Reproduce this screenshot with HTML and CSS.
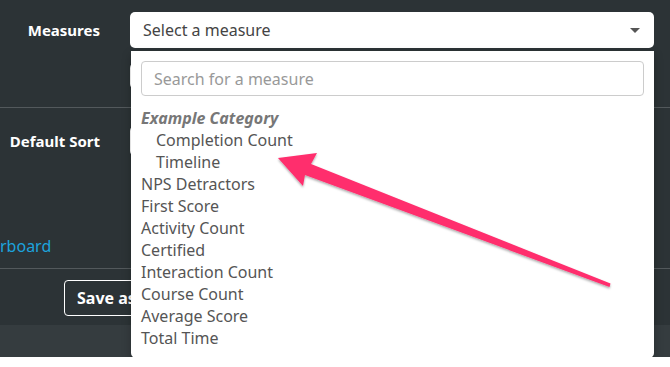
FILE: index.html
```html
<!DOCTYPE html>
<html lang="en">
<head>
  <meta charset="UTF-8">
  <title>Report Settings</title>
  <link rel="stylesheet" href="styles.css">
</head>
<body>

  <div class="panel">
    <div class="row row-measures">
      <label class="label">Measures</label>
      <div class="field">
        <div class="select">
          <span>Select a measure</span>
          <span class="caret"></span>
        </div>
        <div class="input ghost"></div>

        <div class="dropdown">
          <input class="search" type="text" placeholder="Search for a measure">
          <ul class="options">
            <li class="group">Example Category</li>
            <li class="sub">Completion Count</li>
            <li class="sub">Timeline</li>
            <li>NPS Detractors</li>
            <li>First Score</li>
            <li>Activity Count</li>
            <li>Certified</li>
            <li>Interaction Count</li>
            <li>Course Count</li>
            <li>Average Score</li>
            <li>Total Time</li>
          </ul>
        </div>
      </div>
    </div>

    <div class="row row-sort">
      <label class="label">Default Sort</label>
      <div class="field">
        <div class="input"></div>
      </div>
    </div>

    <div class="row-link">
      <a href="#">rboard</a>
    </div>

    <div class="row-actions">
      <button class="btn">Save as</button>
    </div>
  </div>
  <div class="footer-strip"></div>

  <!-- annotation arrow -->
  <svg class="arrow" width="670" height="367" viewBox="0 0 670 367">
    <defs>
      <filter id="shadow" x="-10%" y="-10%" width="120%" height="130%">
        <feDropShadow dx="0" dy="1.5" stdDeviation="1" flood-color="#000" flood-opacity="0.35"/>
      </filter>
    </defs>
    <polygon filter="url(#shadow)" fill="#ff2d6d"
      points="278,158 317,153 311,164 610.5,283.6 609.5,287 305,175 303,186"/>
  </svg>

</body>
</html>
```

FILE: styles.css
```css
body {
  margin: 0;
  background-color: white;
  font-family: "Noto Sans", "Lato", sans-serif;
  color: #555;
  overflow: hidden;
}
.panel {
  background-color: #2c3336;
  padding-top: 12px;
}
.row {
  display: grid;
  grid-template-columns: 130px 524px;
}
.label {
  color: white;
  font-weight: bold;
  font-size: 15px;
  text-align: right;
  padding-right: 30px;
  line-height: 36px;
}
.row-measures {
  height: 95px;
  border-bottom: 1px solid #53595c;
  position: relative;
  z-index: 2;
}
.row-sort {
  height: 120px;
}
.row-sort .label {
  padding-top: 17px;
  line-height: 32px;
}
.row-sort .input {
  margin-top: 17px;
}
.field {
  position: relative;
}
.select {
  height: 36px;
  background: white;
  border-radius: 5px;
  display: flex;
  align-items: center;
  justify-content: space-between;
  padding: 0 14px 0 13px;
  box-sizing: border-box;
  font-size: 16px;
  color: #444;
}
.caret {
  width: 0;
  height: 0;
  border-left: 5px solid transparent;
  border-right: 5px solid transparent;
  border-top: 5px solid #555;
}
.input {
  height: 32px;
  background: white;
  border-radius: 6px;
}
.ghost {
  margin-top: 14px;
  height: 28px;
}
.dropdown {
  position: absolute;
  top: 39px;
  left: 1px;
  width: 523px;
  height: 307px;
  background: white;
  border-radius: 0 0 5px 5px;
  box-shadow: 0 4px 10px rgba(0, 0, 0, 0.25);
  padding: 10px;
  box-sizing: border-box;
}
.search {
  display: block;
  width: 100%;
  height: 35px;
  box-sizing: border-box;
  border: 1px solid #ccc;
  border-radius: 4px;
  padding: 0 12px;
  font-family: inherit;
  font-size: 16px;
  color: #555;
}
.search::placeholder {
  color: #999;
}
.options {
  list-style: none;
  margin: 11px 0 0;
  padding: 0;
  font-size: 16px;
  line-height: 22px;
  color: #555;
}
.options .group {
  font-style: italic;
  font-weight: bold;
  color: #777;
}
.options .sub {
  padding-left: 15px;
}
.row-link {
  height: 40px;
  border-bottom: 1px solid #53595c;
  padding-top: 7px;
  line-height: 22px;
  box-sizing: content-box;
}
.row-link a {
  color: #1ca3dd;
  text-decoration: none;
  font-size: 16px;
}
.row-link {
  height: 33px;
}
.row-actions {
  height: 56px;
  padding-top: 11px;
  padding-left: 64px;
  box-sizing: border-box;
}
.btn {
  height: 36px;
  width: 90px;
  background: transparent;
  border: 1px solid white;
  border-radius: 4px;
  color: white;
  font-family: inherit;
  font-weight: bold;
  font-size: 16px;
  text-align: left;
  padding-left: 12px;
}
.footer-strip {
  height: 32px;
  background-color: #353c3f;
}
.arrow {
  position: absolute;
  left: 0;
  top: 0;
  z-index: 3;
  pointer-events: none;
}
```
